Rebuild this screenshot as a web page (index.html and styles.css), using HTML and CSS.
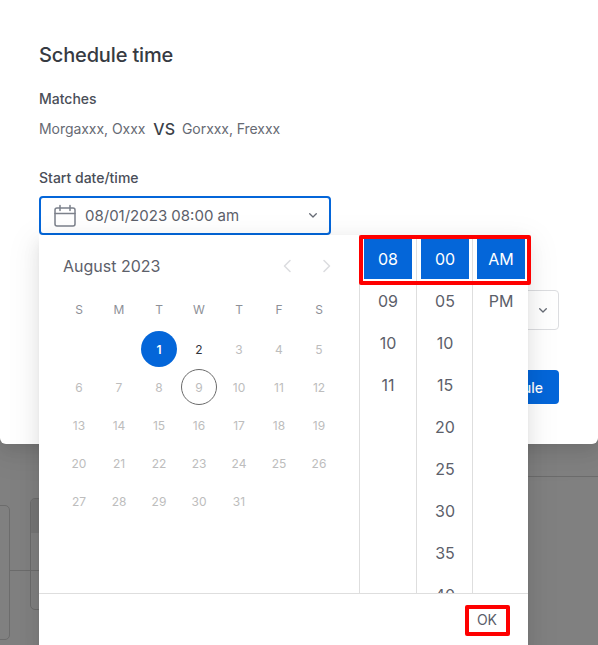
FILE: index.html
```html
<!DOCTYPE html>
<html lang="en">
<head>
<meta charset="utf-8">
<title>Schedule time</title>
<link rel="stylesheet" href="styles.css">
</head>
<body>
<div class="backdrop-shape shape-a"></div>
<div class="backdrop-shape shape-b"><div class="shape-b-head"></div></div>
<div class="backdrop-line line-a"></div>
<div class="backdrop-line line-b"></div>

<section class="modal">
  <h1 class="title">Schedule time</h1>
  <div class="label label-matches">Matches</div>
  <div class="players">
    <span>Morgaxxx, Oxxx</span><span class="vs">VS</span><span>Gorxxx, Frexxx</span>
  </div>
  <div class="label label-start">Start date/time</div>
  <div class="date-input">
    <svg class="cal-icon" viewBox="0 0 24 24" width="24" height="24" fill="none" stroke="#7b808a" stroke-width="1.5" stroke-linecap="round" stroke-linejoin="round">
      <rect x="2" y="4" width="20" height="18" rx="2"/>
      <path d="M2 9.5h20M7 1.5v5M17 1.5v5"/>
    </svg>
    <span class="date-value">08/01/2023 08:00 am</span>
    <svg class="chev" viewBox="0 0 8 5" width="8" height="5" fill="none" stroke="#666b75" stroke-width="1.3" stroke-linecap="round" stroke-linejoin="round"><path d="M.7.7L4 4 7.3.7"/></svg>
  </div>
  <div class="select-row">
    <svg class="chev" viewBox="0 0 8 5" width="8" height="5" fill="none" stroke="#666b75" stroke-width="1.3" stroke-linecap="round" stroke-linejoin="round"><path d="M.7.7L4 4 7.3.7"/></svg>
  </div>
  <div class="actions"><button class="primary">Schedule</button></div>
</section>

<div class="popup">
  <div class="popup-body">
    <div class="calendar">
      <div class="cal-head">
        <span class="month">August 2023</span>
        <div class="nav">
          <svg viewBox="0 0 10 14" width="10" height="14" fill="none" stroke="#dcdde0" stroke-width="1.6" stroke-linecap="round" stroke-linejoin="round"><path d="M8 1.5L2.5 7 8 12.5"/></svg>
          <svg viewBox="0 0 10 14" width="10" height="14" fill="none" stroke="#dcdde0" stroke-width="1.6" stroke-linecap="round" stroke-linejoin="round"><path d="M2 1.5L7.5 7 2 12.5"/></svg>
        </div>
      </div>
      <div class="grid">
        <span class="dow">S</span><span class="dow">M</span><span class="dow">T</span><span class="dow">W</span><span class="dow">T</span><span class="dow">F</span><span class="dow">S</span>
        <span></span><span></span>
        <span class="day"><b class="sel">1</b></span><span class="day today-ish">2</span><span class="day">3</span><span class="day">4</span><span class="day">5</span>
        <span class="day">6</span><span class="day">7</span><span class="day">8</span><span class="day"><b class="ring">9</b></span><span class="day">10</span><span class="day">11</span><span class="day">12</span>
        <span class="day">13</span><span class="day">14</span><span class="day">15</span><span class="day">16</span><span class="day">17</span><span class="day">18</span><span class="day">19</span>
        <span class="day">20</span><span class="day">21</span><span class="day">22</span><span class="day">23</span><span class="day">24</span><span class="day">25</span><span class="day">26</span>
        <span class="day">27</span><span class="day">28</span><span class="day">29</span><span class="day">30</span><span class="day">31</span>
      </div>
    </div>
    <div class="time-col col-first">
      <div class="cell on">08</div><div class="cell">09</div><div class="cell">10</div><div class="cell">11</div>
    </div>
    <div class="time-col">
      <div class="cell on">00</div><div class="cell">05</div><div class="cell">10</div><div class="cell">15</div><div class="cell">20</div><div class="cell">25</div><div class="cell">30</div><div class="cell">35</div><div class="cell">40</div>
    </div>
    <div class="time-col">
      <div class="cell on">AM</div><div class="cell">PM</div>
    </div>
  </div>
  <div class="popup-foot"><span class="ok">OK</span></div>
</div>

<div class="mark mark-time"></div>
<div class="mark mark-ok"></div>
</body>
</html>
```

FILE: styles.css
```css
* { box-sizing: border-box; }
html, body { margin: 0; height: 645px; overflow: hidden; }
body {
  position: relative;
  width: 598px;
  background: #808080;
  font-family: Inter, "Liberation Sans", sans-serif;
  color: #666a73;
}

/* dimmed page behind the modal */
.backdrop-shape { position: absolute; border: 1px solid #6c6c6c; border-radius: 5px; }
.shape-a { left: -40px; top: 505px; width: 50px; height: 135px; }
.shape-b { left: 30px; top: 498px; width: 40px; height: 112px; overflow: hidden; }
.shape-b-head { height: 34px; background: #767676; }
.backdrop-line { position: absolute; height: 1px; background: #6c6c6c; }
.line-a { left: 528px; right: 0; top: 476px; }
.line-b { left: 10px; width: 30px; top: 570px; }

/* modal */
.modal {
  position: relative;
  height: 444px;
  padding: 41px 39px 0 39px;
  background: #fff;
  border-radius: 0 0 6px 6px;
  box-shadow: 0 6px 16px rgba(0,0,0,.08), 0 9px 28px 8px rgba(0,0,0,.05);
}
.title { margin: 0; font-size: 20px; line-height: 28px; font-weight: 500; color: #363a42; letter-spacing: -.15px; }
.label { font-size: 14px; line-height: 20px; font-weight: 500; color: #4a4e58; }
.label-matches { margin-top: 20px; }
.label-start { margin-top: 29px; }
.players {
  display: flex;
  align-items: center;
  height: 20px;
  margin-top: 10px;
  font-size: 14px;
  line-height: 18px;
  color: #666a73;
  letter-spacing: -.05px;
}
.vs { margin: 0 7px 0 8px; font-size: 16px; font-weight: 500; color: #3b3f48; }
.date-input {
  display: flex;
  align-items: center;
  width: 292px;
  height: 39px;
  margin-top: 8px;
  padding: 0 12px 0 12px;
  border: 2px solid #0466d9;
  border-radius: 4px;
}
.cal-icon { flex: none; }
.date-value { margin-left: 8px; flex: 1; font-size: 15px; color: #5c606a; }
.select-row {
  display: flex;
  align-items: center;
  justify-content: flex-end;
  height: 40px;
  margin-top: 55px;
  padding-right: 11px;
  border: 1px solid #dcdde0;
  border-radius: 4px;
}
.actions { display: flex; justify-content: flex-end; margin-top: 40px; }
.primary {
  height: 34px;
  padding: 0 16px;
  border: 0;
  border-radius: 4px;
  background: #0466d9;
  color: #fff;
  font: 500 14px Inter, "Liberation Sans", sans-serif;
}

/* date-time dropdown */
.popup {
  position: absolute;
  left: 39px;
  top: 235px;
  width: 489px;
  background: #fff;
  box-shadow: 0 6px 16px rgba(0,0,0,.08), 0 3px 6px -4px rgba(0,0,0,.12), 0 9px 28px 8px rgba(0,0,0,.05);
}
.popup-body { display: flex; height: 358px; overflow: hidden; }
.calendar { flex: 0 0 320px; padding: 16px 20px 0; }
.cal-head { display: flex; align-items: center; justify-content: space-between; height: 30px; padding: 0 7px 0 4px; }
.month { font-size: 16px; color: #5c606a; }
.nav { display: flex; gap: 30px; }
.grid { display: grid; grid-template-columns: repeat(7, 40px); grid-template-rows: 40px; grid-auto-rows: 38px; margin-top: 9px; }
.dow, .day { display: flex; align-items: center; justify-content: center; font-size: 12px; }
.dow { height: 38px; color: #8d9097; }
.day { color: #bdbdbd; }
.today-ish { color: #30343c; }
.sel, .ring {
  display: flex;
  align-items: center;
  justify-content: center;
  flex: none;
  width: 36px;
  height: 36px;
  border-radius: 50%;
  font-weight: 400;
}
.sel { background: #0466d9; color: #fff; font-weight: 600; }
.ring { border: 1px solid #6b6b6b; }

.time-col { flex: 0 0 56px; padding: 4px 0 0 4px; border-left: 1px solid #dedede; }
.col-first { flex-basis: 57px; }
.cell {
  display: flex;
  align-items: center;
  justify-content: center;
  width: 48px;
  height: 40px;
  margin-bottom: 2px;
  font-size: 16px;
  color: #5c606a;
}
.on { background: #0466d9; color: #fff; }

.popup-foot {
  display: flex;
  justify-content: flex-end;
  height: 60px;
  padding: 16px 31px 0 0;
  border-top: 1px solid #dedede;
}
.ok { font-size: 14px; line-height: 20px; color: #5c606a; }

/* red call-out boxes */
.mark { position: absolute; border: 4px solid #fe0000; border-radius: 2px; }
.mark-time { left: 359px; top: 235px; width: 172px; height: 50px; }
.mark-ok { left: 465px; top: 605px; width: 45px; height: 31px; }
```
